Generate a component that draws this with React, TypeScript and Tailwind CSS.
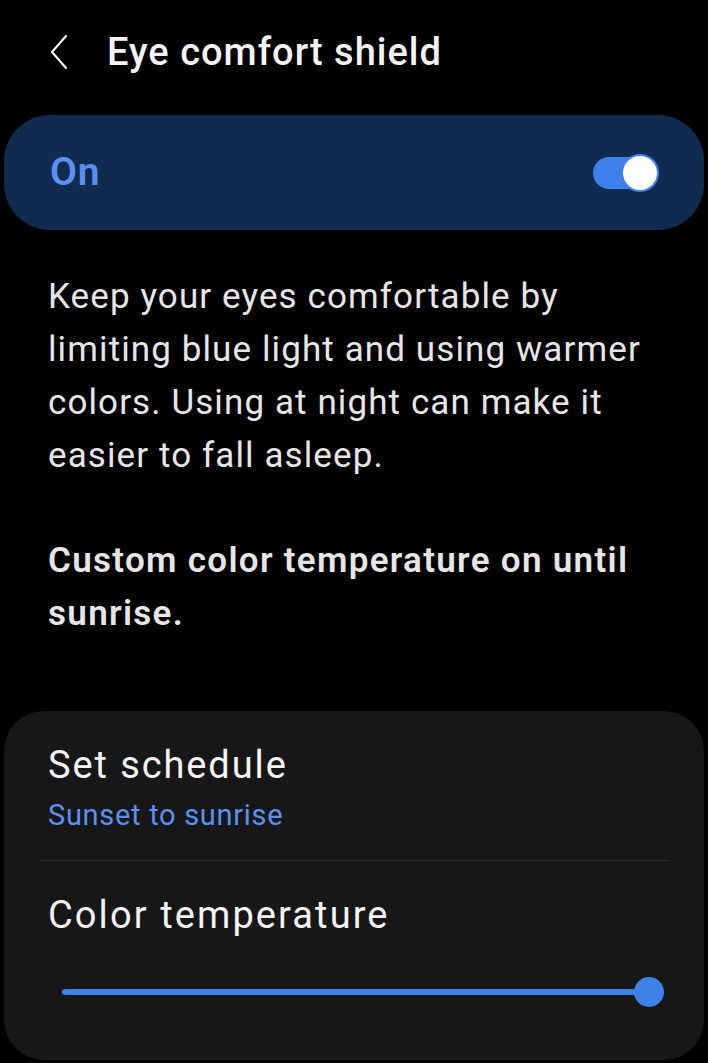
const FONT = "font-['Roboto',_'Noto_Sans',_sans-serif]";

function BackChevron() {
  return (
    <svg width="20" height="36" viewBox="0 0 20 36" fill="none" className="shrink-0">
      <path d="M17 2 L3 18 L17 34" stroke="#f2f2f2" strokeWidth="2.2" strokeLinecap="round" strokeLinejoin="round" />
    </svg>
  );
}

function Toggle() {
  return (
    <div className="relative h-[38px] w-[66px]">
      <div className="absolute left-0 top-[3px] h-[32px] w-[57px] rounded-full bg-[#3f80ea]" />
      <div className="absolute right-0 top-0 h-[38px] w-[38px] rounded-full border-2 border-[#3f80ea] bg-white" />
    </div>
  );
}

export default function App() {
  return (
    <div className={`${FONT} min-h-[1063px] w-full bg-black pt-[28px] text-white`}>
      {/* header */}
      <div className="flex h-[48px] items-center gap-[38px] pl-[49px]">
        <BackChevron />
        <h1 className="text-[38px] leading-[48px] font-medium tracking-[1px] text-[#f4f4f4]">Eye comfort shield</h1>
      </div>

      {/* master switch */}
      <div className="mx-1 mt-[39px] flex h-[115px] items-center justify-between rounded-[46px] bg-[#112a50] pl-[46px] pr-[45px]">
        <span className="text-[39px] font-semibold tracking-[0.8px] text-[#5b90f0]">On</span>
        <Toggle />
      </div>

      {/* description */}
      <div className="mt-[40px] px-[48px] text-[35px] leading-[53px] tracking-[1.1px] text-[#e6e6e6]">
        <p>
          Keep your eyes comfortable by<br />
          limiting blue light and using warmer<br />
          colors. Using at night can make it<br />
          easier to fall asleep.
        </p>
        <p className="mt-[52px] font-semibold tracking-[1.3px]">
          Custom color temperature on until<br />
          sunrise.
        </p>
      </div>

      {/* settings card */}
      <div className="mx-1 mt-[71px] rounded-[40px] bg-[#171717] pb-[53px] pt-[32px]">
        <div className="px-[44px]">
          <div className="text-[38px] leading-[44px] tracking-[1.9px] text-[#f4f4f4]">Set schedule</div>
          <div className="mt-[10px] text-[29px] leading-[36px] tracking-[0.7px] text-[#5b90f0]">Sunset to sunrise</div>
        </div>
        <div className="ml-[36px] mr-[34px] mt-[27px] h-px bg-[#2f2f2f]" />
        <div className="mt-[32px] px-[44px] text-[38px] leading-[44px] tracking-[2.1px] text-[#f4f4f4]">Color temperature</div>
        <div className="ml-[58px] mr-[40px] mt-[40px] flex h-[30px] items-center">
          <div className="h-[6px] flex-1 rounded-full bg-[#3f80ea]" />
          <div className="-ml-[15px] h-[30px] w-[30px] shrink-0 rounded-full bg-[#3f80ea]" />
        </div>
      </div>
    </div>
  );
}
